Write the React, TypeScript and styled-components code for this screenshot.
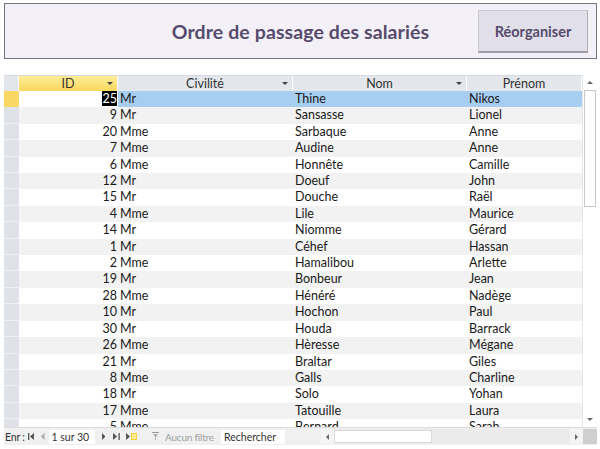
import React from 'react'
import styled, { createGlobalStyle } from 'styled-components'

const GlobalStyle = createGlobalStyle`
    html, body {
        margin: 0;
        padding: 0;
        background: #ffffff;
    }
    body {
        font-family: Lato, "Open Sans", Arial, sans-serif;
        color: #000;
    }
`

const Page = styled.div`
    width: 600px;
    height: 449px;
    padding: 3px 3px 0 4px;
    box-sizing: border-box;
    display: flex;
    flex-direction: column;
    overflow: hidden;
`

const Banner = styled.div`
    height: 56px;
    box-sizing: border-box;
    border: 1px solid #76727f;
    background: #f3f1f7;
    display: grid;
    grid-template-columns: 1fr auto 1fr;
    align-items: center;
    padding: 0 8px;
`

const Title = styled.h1`
    grid-column: 2;
    margin: 0;
    font-family: Lato, sans-serif;
    font-weight: 700;
    font-size: 19.5px;
    color: #574b6d;
    letter-spacing: 0.1px;
`

const ReorgButton = styled.button`
    grid-column: 3;
    justify-self: end;
    width: 110px;
    height: 43px;
    margin-top: 1px;
    border: 1px solid #c9c7d3;
    border-bottom: 2px solid #9d9aa6;
    border-right: 1px solid #b1aeba;
    background: #e1e0ea;
    color: #574b6d;
    font-family: Lato, sans-serif;
    font-weight: 700;
    font-size: 14.5px;
    cursor: pointer;
`

const Sheet = styled.div`
    margin-top: 16px;
    height: 370px;
    display: flex;
    flex-direction: column;
`

const SheetBody = styled.div`
    flex: 1;
    display: flex;
    min-height: 0;
`

const Main = styled.div`
    flex: 1;
    display: flex;
    flex-direction: column;
    min-width: 0;
    overflow: hidden;
`

const cols = '15px 99px 175px 174px 1fr'

const HeaderRow = styled.div`
    display: grid;
    grid-template-columns: ${cols};
    height: 16px;
    flex-shrink: 0;
    background: #e3e6eb;
    border-top: 1px solid #d7dbe1;
    box-sizing: border-box;
`

const HeadCell = styled.div<{ active?: boolean }>`
    position: relative;
    display: flex;
    align-items: center;
    justify-content: center;
    font-size: 12.5px;
    color: #333;
    border-right: 1px solid #ffffff;
    background: ${p => p.active ? 'linear-gradient(#fdec97, #f9d85e)' : 'transparent'};
`

const DropArrow = styled.span`
    position: absolute;
    right: 4px;
    top: 6px;
    width: 0;
    height: 0;
    border-left: 3px solid transparent;
    border-right: 3px solid transparent;
    border-top: 3px solid #444;
`

const Rows = styled.div`
    flex: 1;
    overflow: hidden;
`

const Row = styled.div<{ shaded: boolean }>`
    display: grid;
    grid-template-columns: ${cols};
    height: 16.42px;
    background: ${p => p.shaded ? '#f2f2f2' : '#ffffff'};
`

const Selector = styled.div<{ current: boolean }>`
    background: ${p => p.current ? '#f9d765' : '#dfe3e8'};
    border-bottom: 1px solid ${p => p.current ? '#f9d765' : '#eef0f3'};
    box-sizing: border-box;
`

const Cell = styled.div<{ num?: boolean, selected?: boolean }>`
    font-size: 12.5px;
    line-height: 16.42px;
    white-space: nowrap;
    overflow: hidden;
    padding: ${p => p.num ? '0 1px 0 0' : '0 0 0 2px'};
    text-align: ${p => p.num ? 'right' : 'left'};
    background: ${p => p.selected ? '#a7cdf0' : 'transparent'};
    color: #1a1a1a;
`

const CurrentId = styled.span`
    background: #000;
    color: #fff;
    padding: 0 0 0 1px;
`

const VScroll = styled.div`
    width: 14px;
    display: flex;
    flex-direction: column;
    background: #ffffff;
    border-left: 1px solid #e6e6e6;
`

const ScrollBtn = styled.div`
    height: 15px;
    display: flex;
    align-items: center;
    justify-content: center;
    flex-shrink: 0;
`

const Thumb = styled.div`
    height: 117px;
    margin: 0 1px;
    border: 1px solid #c8c8c8;
    box-sizing: border-box;
    background: #fff;
`

const Track = styled.div`
    flex: 1;
`

const NavBar = styled.div`
    height: 18px;
    flex-shrink: 0;
    display: flex;
    align-items: center;
    background: #f0f0f0;
    border-top: 1px solid #dcdcdc;
    box-sizing: border-box;
    font-size: 10.5px;
    color: #333;
`

const NavLabel = styled.span`
    width: 22px;
    padding-left: 1px;
    white-space: nowrap;
    box-sizing: border-box;
    letter-spacing: -0.2px;
`

const NavIcon = styled.span<{ ml: number, dim?: boolean }>`
    display: inline-flex;
    align-items: center;
    margin-left: ${p => p.ml}px;
    opacity: ${p => p.dim ? 0.45 : 1};
`

const NavBox = styled.div<{ w: number, ml: number }>`
    width: ${p => p.w}px;
    margin-left: ${p => p.ml}px;
    height: 14px;
    background: #fff;
    line-height: 14px;
    padding-left: 3px;
    box-sizing: border-box;
    white-space: nowrap;
`

const FilterText = styled.span`
    width: 52px;
    margin-left: 4px;
    font-size: 10px;
    letter-spacing: -0.2px;
    color: #a0a0a0;
    white-space: nowrap;
`

const HScroll = styled.div`
    margin-left: 36px;
    flex: 1;
    height: 15px;
    display: flex;
    align-items: center;
    background: #ebebeb;
`

const HBtn = styled.div`
    width: 13px;
    height: 15px;
    display: flex;
    align-items: center;
    justify-content: center;
    background: #f4f4f4;
`

const HThumb = styled.div`
    width: 98px;
    height: 13px;
    background: #fff;
    border: 1px solid #dadada;
    box-sizing: border-box;
`

const HTrack = styled.div`
    flex: 1;
`

const Corner = styled.div`
    width: 14px;
    height: 15px;
    background: #cfcfcf;
`

type Person = [number, string, string, string]

const people: Person[] = [
    [25, 'Mr', 'Thine', 'Nikos'],
    [9, 'Mr', 'Sansasse', 'Lionel'],
    [20, 'Mme', 'Sarbaque', 'Anne'],
    [7, 'Mme', 'Audine', 'Anne'],
    [6, 'Mme', 'Honnête', 'Camille'],
    [12, 'Mr', 'Doeuf', 'John'],
    [15, 'Mr', 'Douche', 'Raël'],
    [4, 'Mme', 'Lile', 'Maurice'],
    [14, 'Mr', 'Niomme', 'Gérard'],
    [1, 'Mr', 'Céhef', 'Hassan'],
    [2, 'Mme', 'Hamalibou', 'Arlette'],
    [19, 'Mr', 'Bonbeur', 'Jean'],
    [28, 'Mme', 'Hénéré', 'Nadège'],
    [10, 'Mr', 'Hochon', 'Paul'],
    [30, 'Mr', 'Houda', 'Barrack'],
    [26, 'Mme', 'Hèresse', 'Mégane'],
    [21, 'Mr', 'Braltar', 'Giles'],
    [8, 'Mme', 'Galls', 'Charline'],
    [18, 'Mr', 'Solo', 'Yohan'],
    [17, 'Mme', 'Tatouille', 'Laura'],
    [5, 'Mme', 'Bernard', 'Sarah'],
]

const Tri: React.FC<{ dir: 'up' | 'down' | 'left' | 'right', color?: string, size?: number }> = ({ dir, color = '#555', size = 3 }) => {
    const s = size
    const pts = {
        up: `0,${s} ${s},0 ${s * 2},${s}`,
        down: `0,0 ${s * 2},0 ${s},${s}`,
        left: `${s},0 ${s},${s * 2} 0,${s}`,
        right: `0,0 0,${s * 2} ${s},${s}`,
    }[dir]
    const w = dir === 'up' || dir === 'down' ? s * 2 : s
    const h = dir === 'up' || dir === 'down' ? s : s * 2
    return (
        <svg width={w} height={h} viewBox={`0 0 ${w} ${h}`}>
            <polygon points={pts} fill={color} />
        </svg>
    )
}

const FirstIcon = () => (
    <svg width="7" height="7" viewBox="0 0 7 7">
        <rect x="0" y="0" width="1.3" height="7" fill="#555" />
        <polygon points="6,0 6,7 2,3.5" fill="#555" />
    </svg>
)

const LastIcon = () => (
    <svg width="7" height="7" viewBox="0 0 7 7">
        <polygon points="0,0 0,7 4,3.5" fill="#555" />
        <rect x="5.5" y="0" width="1.3" height="7" fill="#555" />
    </svg>
)

const NewIcon = () => (
    <svg width="11" height="9" viewBox="0 0 11 9">
        <polygon points="0,1 0,8 4,4.5" fill="#555" />
        <rect x="5" y="1" width="6" height="7" fill="#f5d23c" />
        <rect x="6" y="2" width="4" height="5" fill="#fbe98f" />
    </svg>
)

const FilterIcon = () => (
    <svg width="9" height="9" viewBox="0 0 9 9">
        <rect x="0" y="0" width="7" height="1" fill="#9a9a9a" />
        <polygon points="1,2 6,2 4,5 4,8 3,8 3,5" fill="#b0b0b0" />
    </svg>
)

export default function App() {
    return (
        <>
            <GlobalStyle />
            <Page>
                <Banner>
                    <Title>Ordre de passage des salariés</Title>
                    <ReorgButton>Réorganiser</ReorgButton>
                </Banner>

                <Sheet>
                    <SheetBody>
                        <Main>
                            <HeaderRow>
                                <HeadCell />
                                <HeadCell active>ID<DropArrow /></HeadCell>
                                <HeadCell>Civilité<DropArrow /></HeadCell>
                                <HeadCell>Nom<DropArrow /></HeadCell>
                                <HeadCell>Prénom</HeadCell>
                            </HeaderRow>
                            <Rows>
                                {people.map(([id, civ, nom, prenom], i) => {
                                    const current = i === 0
                                    return (
                                        <Row key={id} shaded={i % 2 === 1}>
                                            <Selector current={current} />
                                            <Cell num>{current ? <CurrentId>{id}</CurrentId> : id}</Cell>
                                            <Cell selected={current}>{civ}</Cell>
                                            <Cell selected={current}>{nom}</Cell>
                                            <Cell selected={current}>{prenom}</Cell>
                                        </Row>
                                    )
                                })}
                            </Rows>
                        </Main>
                        <VScroll>
                            <ScrollBtn><Tri dir="up" color="#666" /></ScrollBtn>
                            <Thumb />
                            <Track />
                            <ScrollBtn><Tri dir="down" color="#666" /></ScrollBtn>
                        </VScroll>
                    </SheetBody>

                    <NavBar>
                        <NavLabel>Enr :</NavLabel>
                        <NavIcon ml={2}><FirstIcon /></NavIcon>
                        <NavIcon ml={6} dim><Tri dir="left" size={3.5} /></NavIcon>
                        <NavBox w={46} ml={4}>1 sur 30</NavBox>
                        <NavIcon ml={7}><Tri dir="right" size={3.5} /></NavIcon>
                        <NavIcon ml={8}><LastIcon /></NavIcon>
                        <NavIcon ml={6}><NewIcon /></NavIcon>
                        <NavIcon ml={15}><FilterIcon /></NavIcon>
                        <FilterText>Aucun filtre</FilterText>
                        <NavBox w={64} ml={4}>Rechercher</NavBox>
                        <HScroll>
                            <HBtn><Tri dir="left" color="#666" /></HBtn>
                            <HThumb />
                            <HTrack />
                            <HBtn><Tri dir="right" color="#666" /></HBtn>
                            <Corner />
                        </HScroll>
                    </NavBar>
                </Sheet>
            </Page>
        </>
    )
}
